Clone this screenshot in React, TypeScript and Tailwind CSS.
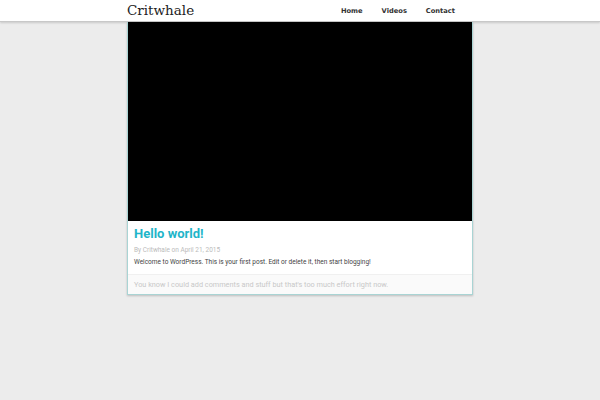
export default function App() {
  return (
    <div className="min-h-[400px] w-[600px] bg-[#ececec]">
      <header className="h-[22px] bg-white border-b border-[#c8c8c8] shadow-[0_1px_2px_rgba(0,0,0,0.15)]">
        <div className="mx-auto flex h-full w-[346px] items-center justify-between">
          <span className="text-[13.5px] leading-none text-[#222] [font-family:'DejaVu_Serif',serif]">
            Critwhale
          </span>
          <nav className="flex h-full items-center gap-[19px] pr-[18px] pt-[2px] text-[6.7px] font-bold text-[#333] [font-family:'DejaVu_Sans',sans-serif]">
            <a>Home</a>
            <a>Videos</a>
            <a>Contact</a>
          </nav>
        </div>
      </header>
      <div className="mx-auto w-[346px] border border-t-0 border-[#a9d4d4] bg-white shadow-[0_1px_2px_rgba(0,0,0,0.2)] [font-family:Roboto,sans-serif]">
        <div className="h-[199px] bg-black" />
        <div className="px-[6px] pt-[4px] pb-[7px]">
          <h1 className="text-[13px] font-bold leading-[18px] text-[#1fb5c9]">Hello world!</h1>
          <p className="mt-[3px] text-[6.5px] leading-[9px] text-[#bbbbbb]">By Critwhale on April 21, 2015</p>
          <p className="mt-[3px] text-[6.5px] leading-[9px] text-[#444]">
            Welcome to WordPress. This is your first post. Edit or delete it, then start blogging!
          </p>
        </div>
        <div className="h-[20px] border-t border-[#f0f0f0] bg-[#fafafa] px-[6px] text-[7.3px] leading-[19px] text-[#c8c8c8]">
          You know I could add comments and stuff but that's too much effort right now.
        </div>
      </div>
    </div>
  );
}
